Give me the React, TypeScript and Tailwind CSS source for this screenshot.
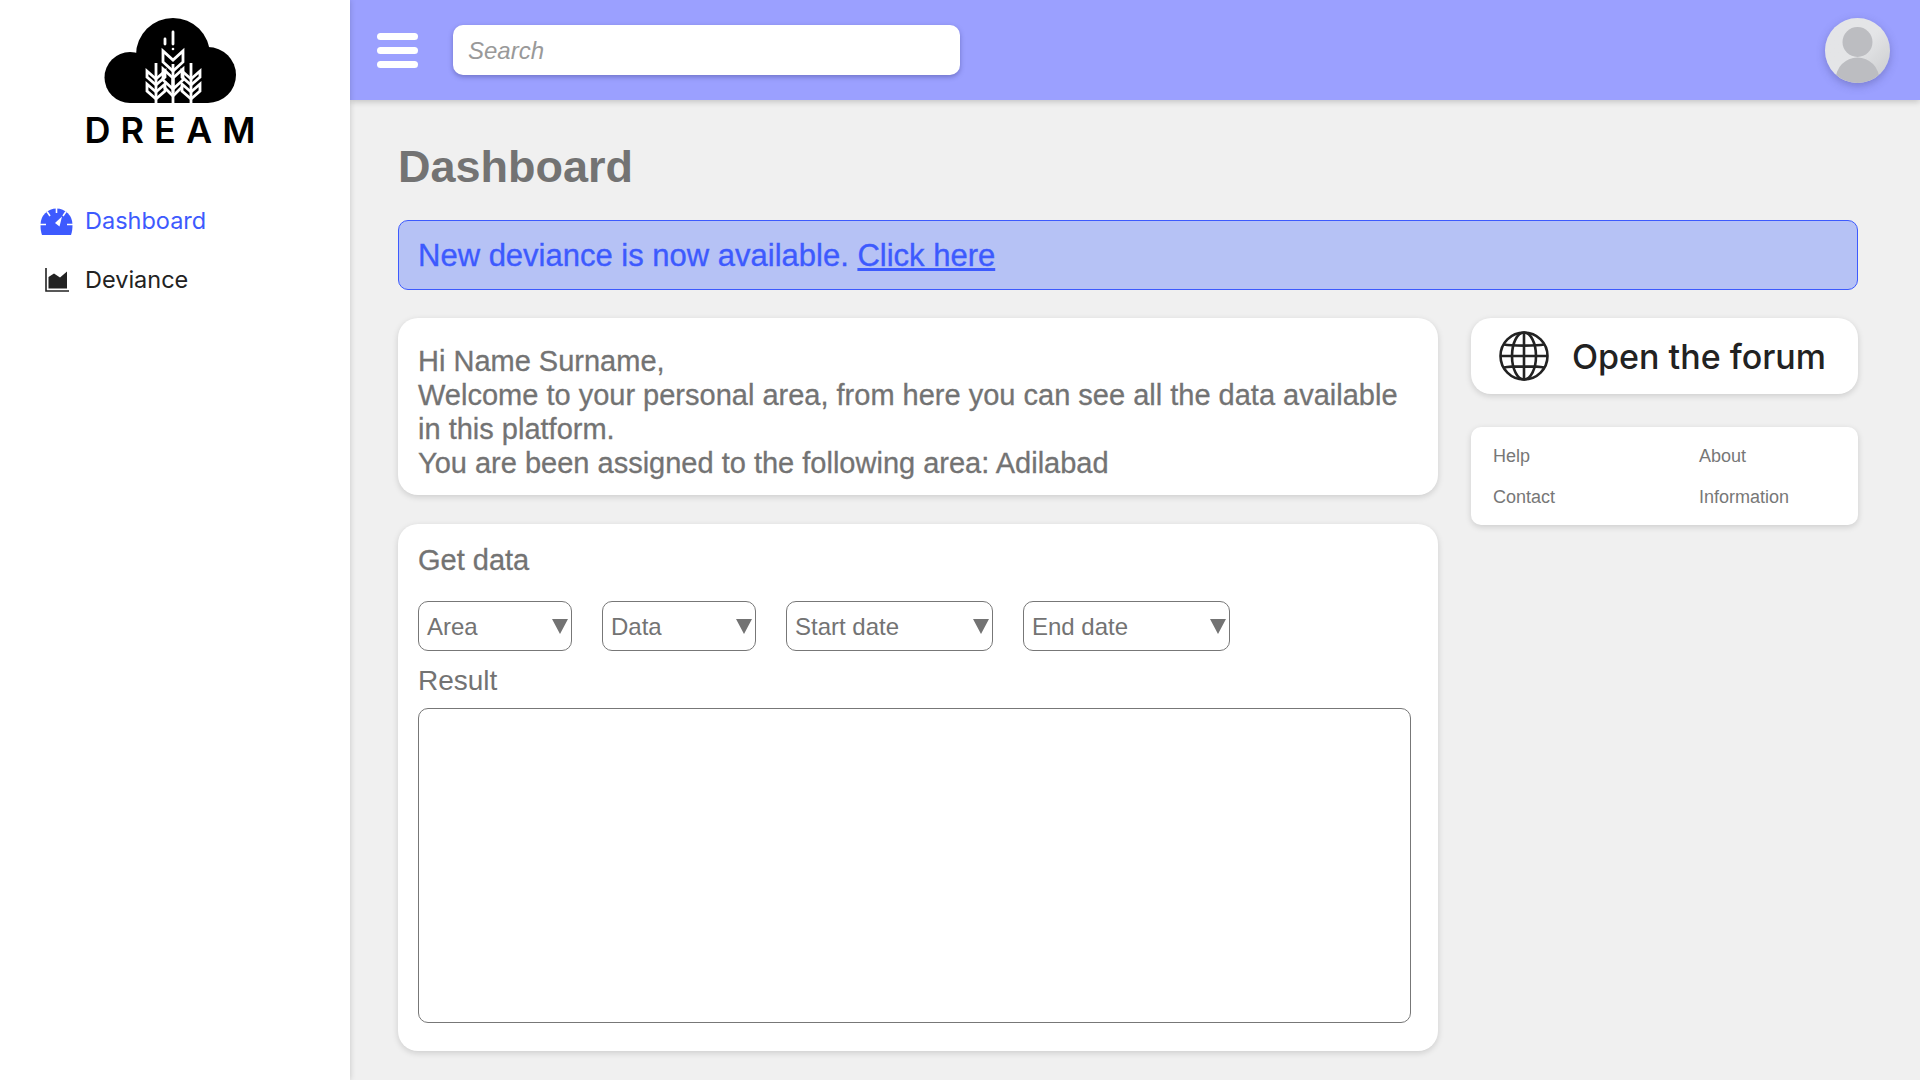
import React from 'react'

const helvetica = "font-['Liberation_Sans',Arial,sans-serif]"

const CloudLogo = () => (
  <svg width="132" height="85" viewBox="104 18 132 85" className="block">
    <circle cx="130" cy="77.5" r="25.5" fill="#000" />
    <circle cx="173" cy="55" r="37" fill="#000" />
    <circle cx="208" cy="75" r="28" fill="#000" />
    <rect x="130" y="60" width="78" height="43" fill="#000" />
    <g stroke="#fff" strokeWidth="2.8" fill="none" strokeLinejoin="miter">
      <path d="M173 103V64" />
      <path d="M163 51V62L173 71L183 62V51L173 60Z" />
      <path d="M163 69V80L173 89V78Z" />
      <path d="M183 69V80L173 89V78Z" />
      <path d="M164 87L173 96L182 87" />
      <path d="M156 103V63" />
      <path d="M147 71V77L156 85L165 77V71L156 79Z" />
      <path d="M147 84V91L156 99L165 91V84L156 92Z" />
      <path d="M191 103V63" />
      <path d="M182 71V77L191 85L200 77V71L191 79Z" />
      <path d="M182 84V91L191 99L200 91V84L191 92Z" />
      <path d="M173 32V44M165 39V44" strokeLinecap="round" />
    </g>
    <circle cx="173" cy="49" r="1.3" fill="#fff" />
  </svg>
)

const GaugeIcon = () => (
  <svg width="33" height="27" viewBox="0 0 33 27">
    <path d="M0.5 16.5A16 16 0 0 1 32.5 16.5C32.5 20 32.2 24 31 27H2C0.8 24 0.5 20 0.5 16.5Z" fill="#3d5afe" />
    <g stroke="#fff" strokeWidth="1.6">
      <path d="M16.5 0V5M7 3.5L10 8M26 3.5L23 8M0 16.5H6M27 16.5H33" />
    </g>
    <path d="M22 8.5L19.5 18.5L15 15Z" fill="#fff" />
  </svg>
)

const AreaChartIcon = () => (
  <svg width="24" height="24" viewBox="0 0 24 24">
    <path d="M1 0V23H24" fill="none" stroke="#222" strokeWidth="1.6" />
    <path d="M3.5 20.5V9L9 5.5L15 9.5L22 3.5V20.5Z" fill="#222" />
  </svg>
)

const GlobeIcon = () => (
  <svg width="50" height="50" viewBox="0 0 50 50" fill="none" stroke="#222" strokeWidth="2.6">
    <circle cx="25" cy="25" r="23.5" />
    <ellipse cx="25" cy="25" rx="12" ry="23.5" />
    <path d="M25 1.5V48.5M1.5 25H48.5M5 13.5C12 15 38 15 45 13.5M5 36.5C12 35 38 35 45 36.5" />
  </svg>
)

const Avatar = () => (
  <div className="w-[65px] h-[65px] rounded-full overflow-hidden shadow-[0_3px_8px_rgba(60,60,120,0.35)] bg-gradient-to-br from-[#e4e5e7] via-[#e4e5e7] to-[#c9cacc]">
    <svg width="65" height="65" viewBox="0 0 65 65">
      <circle cx="32.5" cy="24" r="15" fill="#bcbdc1" />
      <ellipse cx="32.5" cy="62" rx="22" ry="22.5" fill="#bcbdc1" />
    </svg>
  </div>
)

const Dropdown = ({ label, width }: { label: string; width: string }) => (
  <div className={`${width} h-[50px] flex items-center justify-between pl-[8px] pr-[3px] pt-[1px] border border-[#777] rounded-[10px] bg-white text-[24px] text-[#737373]`}>
    <span>{label}</span>
    <svg width="16" height="15" viewBox="0 0 16 15">
      <path d="M0 0H16L8 15Z" fill="#737373" />
    </svg>
  </div>
)

export default function App() {
  return (
    <div className={`flex h-screen w-full overflow-hidden bg-[#f0f0f0] ${helvetica}`}>
      {/* Sidebar */}
      <aside className="w-[350px] shrink-0 bg-white shadow-[0_0_6px_rgba(0,0,0,0.18)] z-10 flex flex-col">
        <div className="flex flex-col items-center pt-[18px] pr-[10px]">
          <CloudLogo />
          <span className="mt-[9px] pl-[10px] font-['Inter',sans-serif] font-semibold text-[36px] leading-[36px] tracking-[0.28em] text-black">DREAM</span>
        </div>
        <nav className="mt-[58px] pl-[40px] flex flex-col gap-[29px] font-['Inter',sans-serif] text-[23.5px] leading-[30px]">
          <div className="flex items-center gap-[12px] text-[#3d5afe]">
            <GaugeIcon />
            <span>Dashboard</span>
          </div>
          <div className="flex items-center text-[#222]">
            <span className="w-[33px] flex justify-center mr-[12px]"><AreaChartIcon /></span>
            <span>Deviance</span>
          </div>
        </nav>
      </aside>

      <div className="flex-1 flex flex-col min-w-0">
        {/* Header */}
        <header className="h-[100px] shrink-0 bg-[#9ba0ff] shadow-[0_2px_6px_rgba(0,0,0,0.18)] flex items-center pl-[27px] pr-[30px]">
          <div className="w-[41px] flex flex-col gap-[7px]">
            <div className="h-[7px] rounded-full bg-white" />
            <div className="h-[7px] rounded-full bg-white" />
            <div className="h-[7px] rounded-full bg-white" />
          </div>
          <div className="ml-[35px] w-[507px] h-[50px] bg-white rounded-[10px] shadow-[0_2px_5px_rgba(50,50,120,0.4)] flex items-center pl-[15px] pt-[2px] text-[24px] italic text-[#999]">
            Search
          </div>
          <div className="ml-auto"><Avatar /></div>
        </header>

        {/* Content */}
        <main className="flex-1 pl-[48px] pr-[62px]">
          <h1 className="mt-[40px] h-[54px] text-[45px] leading-[54px] font-bold text-[#737373]">Dashboard</h1>
          <div className="mt-[26px] h-[70px] flex items-center px-[19px] pt-[3px] bg-[#b6c2f5] border border-[#3d5afe] rounded-[10px] text-[31px] text-[#3d5afe] [-webkit-text-stroke:0.35px_#3d5afe]">
            <span>New deviance is now available. <span className="underline">Click here</span></span>
          </div>

          <div className="mt-[28px] flex items-start gap-[33px]">
            <div className="w-[1040px] shrink-0 flex flex-col gap-[29px]">
              <section className="h-[177px] bg-white rounded-[20px] shadow-[0_2px_6px_rgba(0,0,0,0.15)] px-[20px] pt-[26px] text-[29px] leading-[34px] text-[#737373] [-webkit-text-stroke:0.3px_#737373]">
                <p>Hi Name Surname,</p>
                <p>Welcome to your personal area, from here you can see all the data available in this platform.</p>
                <p>You are been assigned to the following area: Adilabad</p>
              </section>

              <section className="h-[527px] bg-white rounded-[20px] shadow-[0_2px_6px_rgba(0,0,0,0.15)] px-[20px] pt-[19px] text-[#737373]">
                <h2 className="text-[29px] leading-[34px] [-webkit-text-stroke:0.3px_#737373]">Get data</h2>
                <div className="mt-[24px] flex gap-[30px]">
                  <Dropdown label="Area" width="w-[154px]" />
                  <Dropdown label="Data" width="w-[154px]" />
                  <Dropdown label="Start date" width="w-[207px]" />
                  <Dropdown label="End date" width="w-[207px]" />
                </div>
                <div className="mt-[13px] text-[28px] leading-[34px]">Result</div>
                <div className="mt-[10px] w-[993px] h-[315px] border border-[#777] rounded-[10px]" />
              </section>
            </div>

            <div className="flex-1 flex flex-col gap-[33px]">
              <div className="h-[76px] bg-white rounded-[20px] shadow-[0_2px_6px_rgba(0,0,0,0.15)] flex items-center pl-[28px] gap-[23px]">
                <GlobeIcon />
                <span className="font-['Inter',sans-serif] font-medium text-[34px] text-[#222]">Open the forum</span>
              </div>
              <div className="h-[98px] bg-white rounded-[10px] shadow-[0_2px_6px_rgba(0,0,0,0.15)] grid grid-cols-[206px_1fr] content-center gap-y-[20px] pl-[22px] pt-[2px] text-[18px] leading-[21px] text-[#777]">
                <span>Help</span>
                <span>About</span>
                <span>Contact</span>
                <span>Information</span>
              </div>
            </div>
          </div>
        </main>
      </div>
    </div>
  )
}
